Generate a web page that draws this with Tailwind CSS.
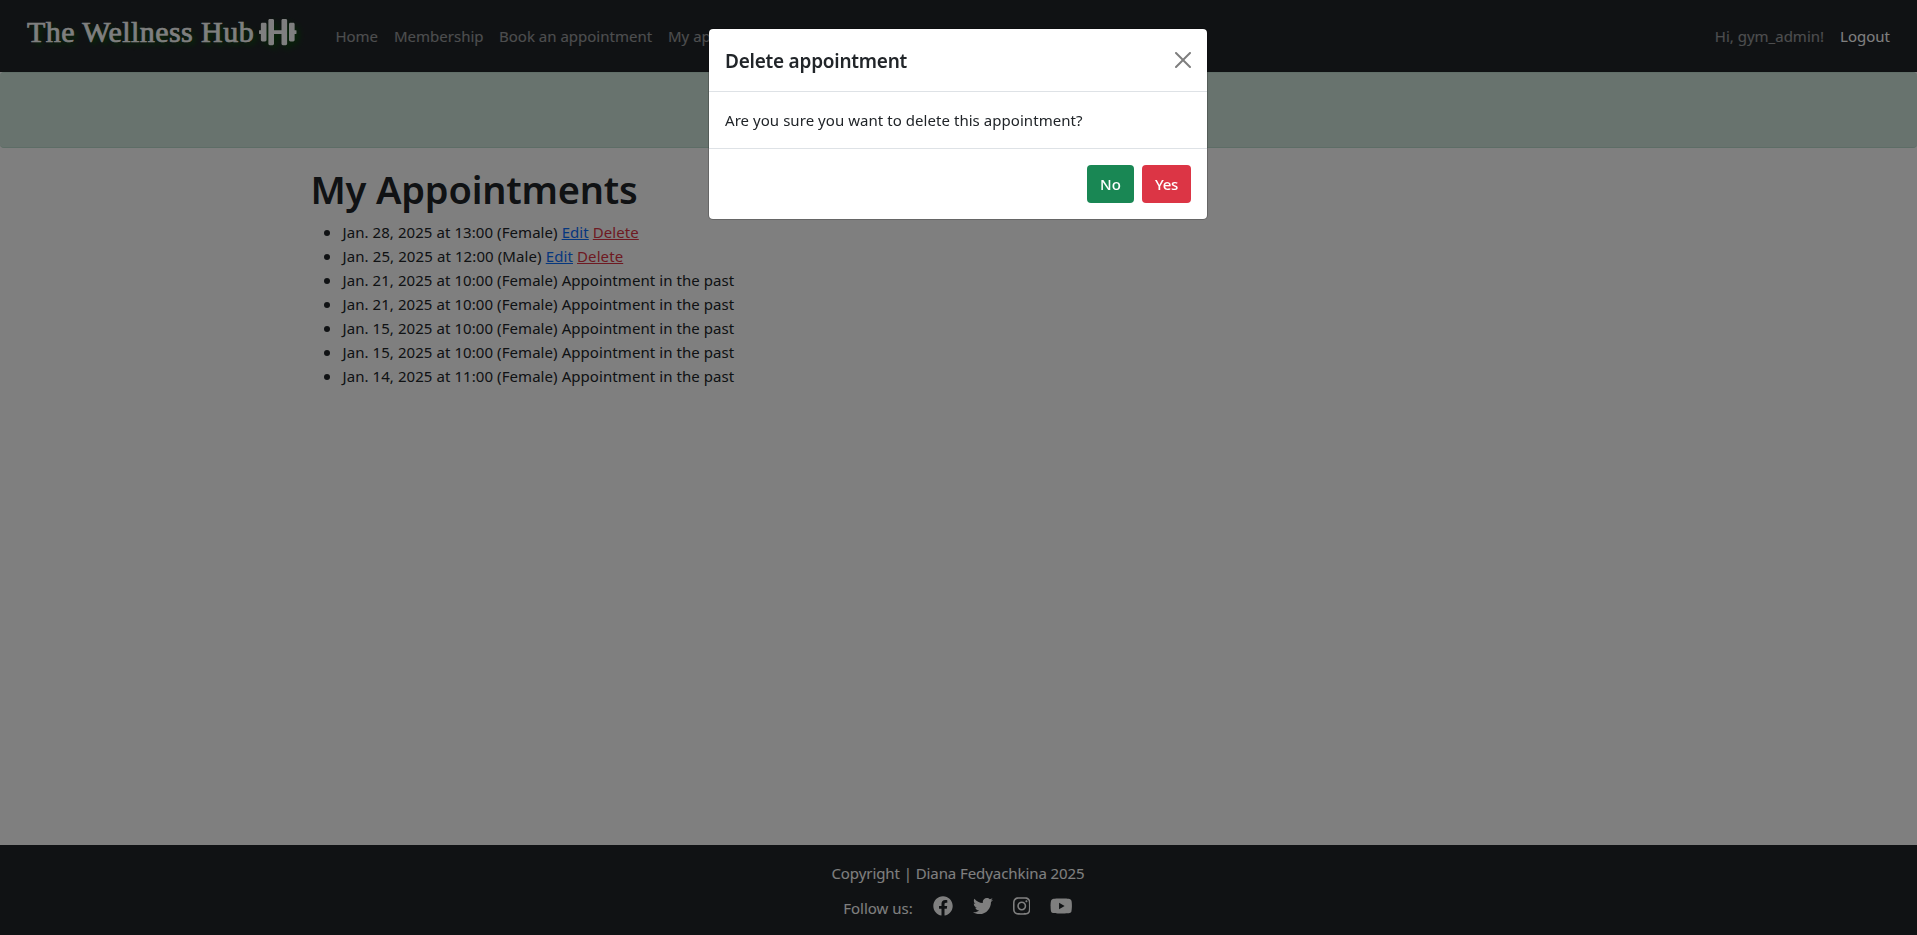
<!DOCTYPE html>
<html lang="en">
<head>
<meta charset="utf-8">
<title>The Wellness Hub - My Appointments</title>
<script src="https://cdn.jsdelivr.net/npm/@tailwindcss/browser@4"></script>
</head>
<body class="bg-white font-['Noto_Sans','Open_Sans',sans-serif] text-[15px] leading-6 text-[#212529]">
<div class="flex h-screen flex-col overflow-hidden">
  <nav class="flex h-[72px] shrink-0 items-center bg-[#212529] pl-[27px] pr-[27px] text-white/55">
    <a href="#" class="-mt-2 flex w-[301.500px] items-center gap-[5px] font-['Liberation_Serif',serif] text-[30px] leading-8 text-white">
      <span class="w-[227px] whitespace-nowrap tracking-[0.420px] [-webkit-text-stroke:0.7px_white] [text-shadow:3px_3px_5px_#0a5c0a]">The Wellness Hub</span>
      <svg class="h-[30px] w-[37.5px] shrink-0 [filter:drop-shadow(3px_3px_3px_#0a4c0a)]" viewBox="0 0 640 512" fill="currentColor"><path d="M104 96H56c-13.300 0-24 10.700-24 24v104H8c-4.400 0-8 3.600-8 8v48c0 4.400 3.600 8 8 8h24v104c0 13.300 10.700 24 24 24h48c13.300 0 24-10.700 24-24V120c0-13.300-10.700-24-24-24zm528 128h-24V120c0-13.300-10.700-24-24-24h-48c-13.300 0-24 10.700-24 24v272c0 13.300 10.700 24 24 24h48c13.300 0 24-10.700 24-24V288h24c4.400 0 8-3.600 8-8v-48c0-4.400-3.600-8-8-8zM456 32h-48c-13.300 0-24 10.700-24 24v168H256V56c0-13.300-10.700-24-24-24h-48c-13.300 0-24 10.700-24 24v400c0 13.300 10.700 24 24 24h48c13.300 0 24-10.700 24-24V288h128v168c0 13.300 10.700 24 24 24h48c13.300 0 24-10.700 24-24V56c0-13.300-10.700-24-24-24z"/></svg>
    </a>
    <div class="flex grow whitespace-nowrap">
      <a href="#" class="w-[59px] pl-[7px] tracking-[-0.1px]">Home</a>
      <a href="#" class="w-[105px] pl-[6.500px]">Membership</a>
      <a href="#" class="w-[169px] pl-[6.500px]">Book an appointment</a>
      <a href="#" class="pl-[6.500px]">My appointments</a>
    </div>
    <span class="mr-4">Hi, gym_admin!</span>
    <a href="#" class="text-white">Logout</a>
  </nav>
  <div class="h-[76px] shrink-0 rounded-[4px] border-y border-[#c2dfd2] border-b-[#badbcc] bg-[#d1e7dd]"></div>
  <main class="grow pl-[310.5px] pt-[17px]">
    <h1 class="text-[38px] font-semibold leading-[48px] tracking-[-0.200px]">My Appointments</h1>
    <ul class="mt-[7px] pl-8 tracking-[0.07px] [&>li]:before:mr-[12.500px] [&>li]:before:-ml-[18.500px] [&>li]:before:inline-block [&>li]:before:size-1.5 [&>li]:before:rounded-full [&>li]:before:bg-[#212529] [&>li]:before:align-[2px] [&>li]:before:content-['']">
      <li>Jan. 28, 2025 at 13:00 (Female) <a href="#" class="text-[#0d6efd] underline">Edit</a> <a href="#" class="text-[#dc3545] underline">Delete</a></li>
      <li class="tracking-[0.1px]">Jan. 25, 2025 at 12:00 (Male) <a href="#" class="text-[#0d6efd] underline">Edit</a> <a href="#" class="text-[#dc3545] underline">Delete</a></li>
      <li>Jan. 21, 2025 at 10:00 (Female) Appointment in the past</li>
      <li>Jan. 21, 2025 at 10:00 (Female) Appointment in the past</li>
      <li>Jan. 15, 2025 at 10:00 (Female) Appointment in the past</li>
      <li>Jan. 15, 2025 at 10:00 (Female) Appointment in the past</li>
      <li>Jan. 14, 2025 at 11:00 (Female) Appointment in the past</li>
    </ul>
  </main>
  <footer class="flex h-[90px] shrink-0 flex-col items-center bg-[#212529] pt-4 text-white">
    <p class="mr-px tracking-[-0.08px]">Copyright | Diana Fedyachkina 2025</p>
    <div class="mr-px mt-[7px] flex h-7 items-center gap-5">
      <span class="mt-[3px]">Follow us:</span>
      <svg class="size-5" viewBox="0 0 512 512" fill="currentColor"><path d="M504 256C504 119 393 8 256 8S8 119 8 256c0 123.780 90.690 226.380 209.250 245V327.690h-63V256h63v-54.640c0-62.150 37-96.480 93.670-96.480 27.140 0 55.520 4.840 55.520 4.840v61h-31.280c-30.800 0-40.410 19.120-40.410 38.730V256h68.780l-11 71.690h-57.780V501C413.310 482.380 504 379.780 504 256z"/></svg>
      <svg class="size-5" viewBox="0 0 512 512" fill="currentColor"><path d="M459.370 151.716c.325 4.548.325 9.097.325 13.645 0 138.720-105.583 298.558-298.558 298.558-59.452 0-114.680-17.219-161.137-47.106 8.447.974 16.568 1.299 25.340 1.299 49.055 0 94.213-16.568 130.274-44.832-46.132-.975-84.792-31.188-98.112-72.772 6.498.974 12.995 1.624 19.818 1.624 9.421 0 18.843-1.300 27.614-3.573-48.081-9.747-84.143-51.980-84.143-102.985v-1.299c13.969 7.797 30.214 12.670 47.431 13.319-28.264-18.843-46.781-51.005-46.781-87.391 0-19.492 5.197-37.360 14.294-52.954 51.655 63.675 129.300 105.258 216.365 109.807-1.624-7.797-2.599-15.918-2.599-24.040 0-57.828 46.782-104.934 104.934-104.934 30.213 0 57.502 12.670 76.670 33.137 23.715-4.548 46.456-13.320 66.599-25.340-7.798 24.366-24.366 44.833-46.132 57.827 21.117-2.273 41.584-8.122 60.426-16.243-14.292 20.791-32.161 39.308-52.628 54.253z"/></svg>
      <svg class="h-5 w-[17.500px]" viewBox="0 0 448 512" fill="currentColor"><path d="M224.100 141c-63.600 0-114.900 51.300-114.900 114.900s51.300 114.900 114.900 114.900S339 319.500 339 255.900 287.700 141 224.100 141zm0 189.600c-41.100 0-74.700-33.500-74.700-74.700s33.500-74.700 74.700-74.700 74.700 33.500 74.700 74.700-33.600 74.700-74.700 74.700zm146.400-194.300c0 14.900-12 26.800-26.800 26.800-14.900 0-26.800-12-26.800-26.800s12-26.800 26.800-26.800 26.800 12 26.800 26.800zm76.100 27.200c-1.700-35.900-9.900-67.700-36.200-93.900-26.200-26.200-58-34.400-93.900-36.200-37-2.100-147.900-2.100-184.900 0-35.800 1.700-67.600 9.900-93.900 36.100s-34.400 58-36.200 93.900c-2.100 37-2.100 147.900 0 184.900 1.700 35.900 9.900 67.700 36.200 93.900s58 34.400 93.900 36.200c37 2.100 147.900 2.100 184.900 0 35.900-1.700 67.700-9.900 93.900-36.200 26.200-26.200 34.400-58 36.200-93.900 2.100-37 2.100-147.800 0-184.800zM398.800 388c-7.800 19.600-22.900 34.700-42.600 42.600-29.500 11.700-99.500 9-132.100 9s-102.700 2.600-132.100-9c-19.600-7.800-34.700-22.900-42.600-42.600-11.700-29.500-9-99.500-9-132.100s-2.600-102.700 9-132.100c7.800-19.600 22.900-34.700 42.600-42.600 29.500-11.700 99.500-9 132.100-9s102.700-2.600 132.100 9c19.600 7.800 34.700 22.900 42.600 42.600 11.700 29.500 9 99.500 9 132.100s2.700 102.700-9 132.100z"/></svg>
      <svg class="h-5 w-[22.500px]" viewBox="0 0 576 512" fill="currentColor"><path d="M549.655 124.083c-6.281-23.650-24.787-42.276-48.284-48.597C458.781 64 288 64 288 64S117.220 64 74.629 75.486c-23.497 6.322-42.003 24.947-48.284 48.597-11.412 42.867-11.412 132.305-11.412 132.305s0 89.438 11.412 132.305c6.281 23.650 24.787 41.500 48.284 47.821C117.220 448 288 448 288 448s170.780 0 213.371-11.486c23.497-6.321 42.003-24.171 48.284-47.821 11.412-42.867 11.412-132.305 11.412-132.305s0-89.438-11.412-132.305zm-317.510 213.508V175.185l142.739 81.205-142.739 81.201z"/></svg>
    </div>
  </footer>
</div>

<div class="fixed inset-0 flex items-start justify-center bg-black/50 pt-7">
  <div class="mr-px w-[500px] rounded-[5px] border border-black/20 bg-white bg-clip-padding">
    <div class="flex h-[63px] items-center justify-between border-b border-[#dee2e6] px-4">
      <h5 class="pt-0.5 text-[19px] font-semibold leading-[30px] tracking-[-0.24px]">Delete appointment</h5>
      <button aria-label="Close" class="opacity-50"><svg class="size-4" viewBox="0 0 16 16"><path d="M.293.293a1 1 0 0 1 1.414 0L8 6.586 14.293.293a1 1 0 1 1 1.414 1.414L9.414 8l6.293 6.293a1 1 0 0 1-1.414 1.414L8 9.414l-6.293 6.293a1 1 0 0 1-1.414-1.414L6.586 8 .293 1.707a1 1 0 0 1 0-1.414z"/></svg></button>
    </div>
    <p class="p-4 tracking-[0.05px]">Are you sure you want to delete this appointment?</p>
    <div class="flex justify-end gap-2 border-t border-[#dee2e6] p-4 font-medium text-white">
      <button class="h-[38px] w-[47px] rounded bg-[#198754]">No</button>
      <button class="h-[38px] w-[49px] rounded bg-[#dc3545] tracking-[-0.3px]">Yes</button>
    </div>
  </div>
</div>
</body>
</html>
